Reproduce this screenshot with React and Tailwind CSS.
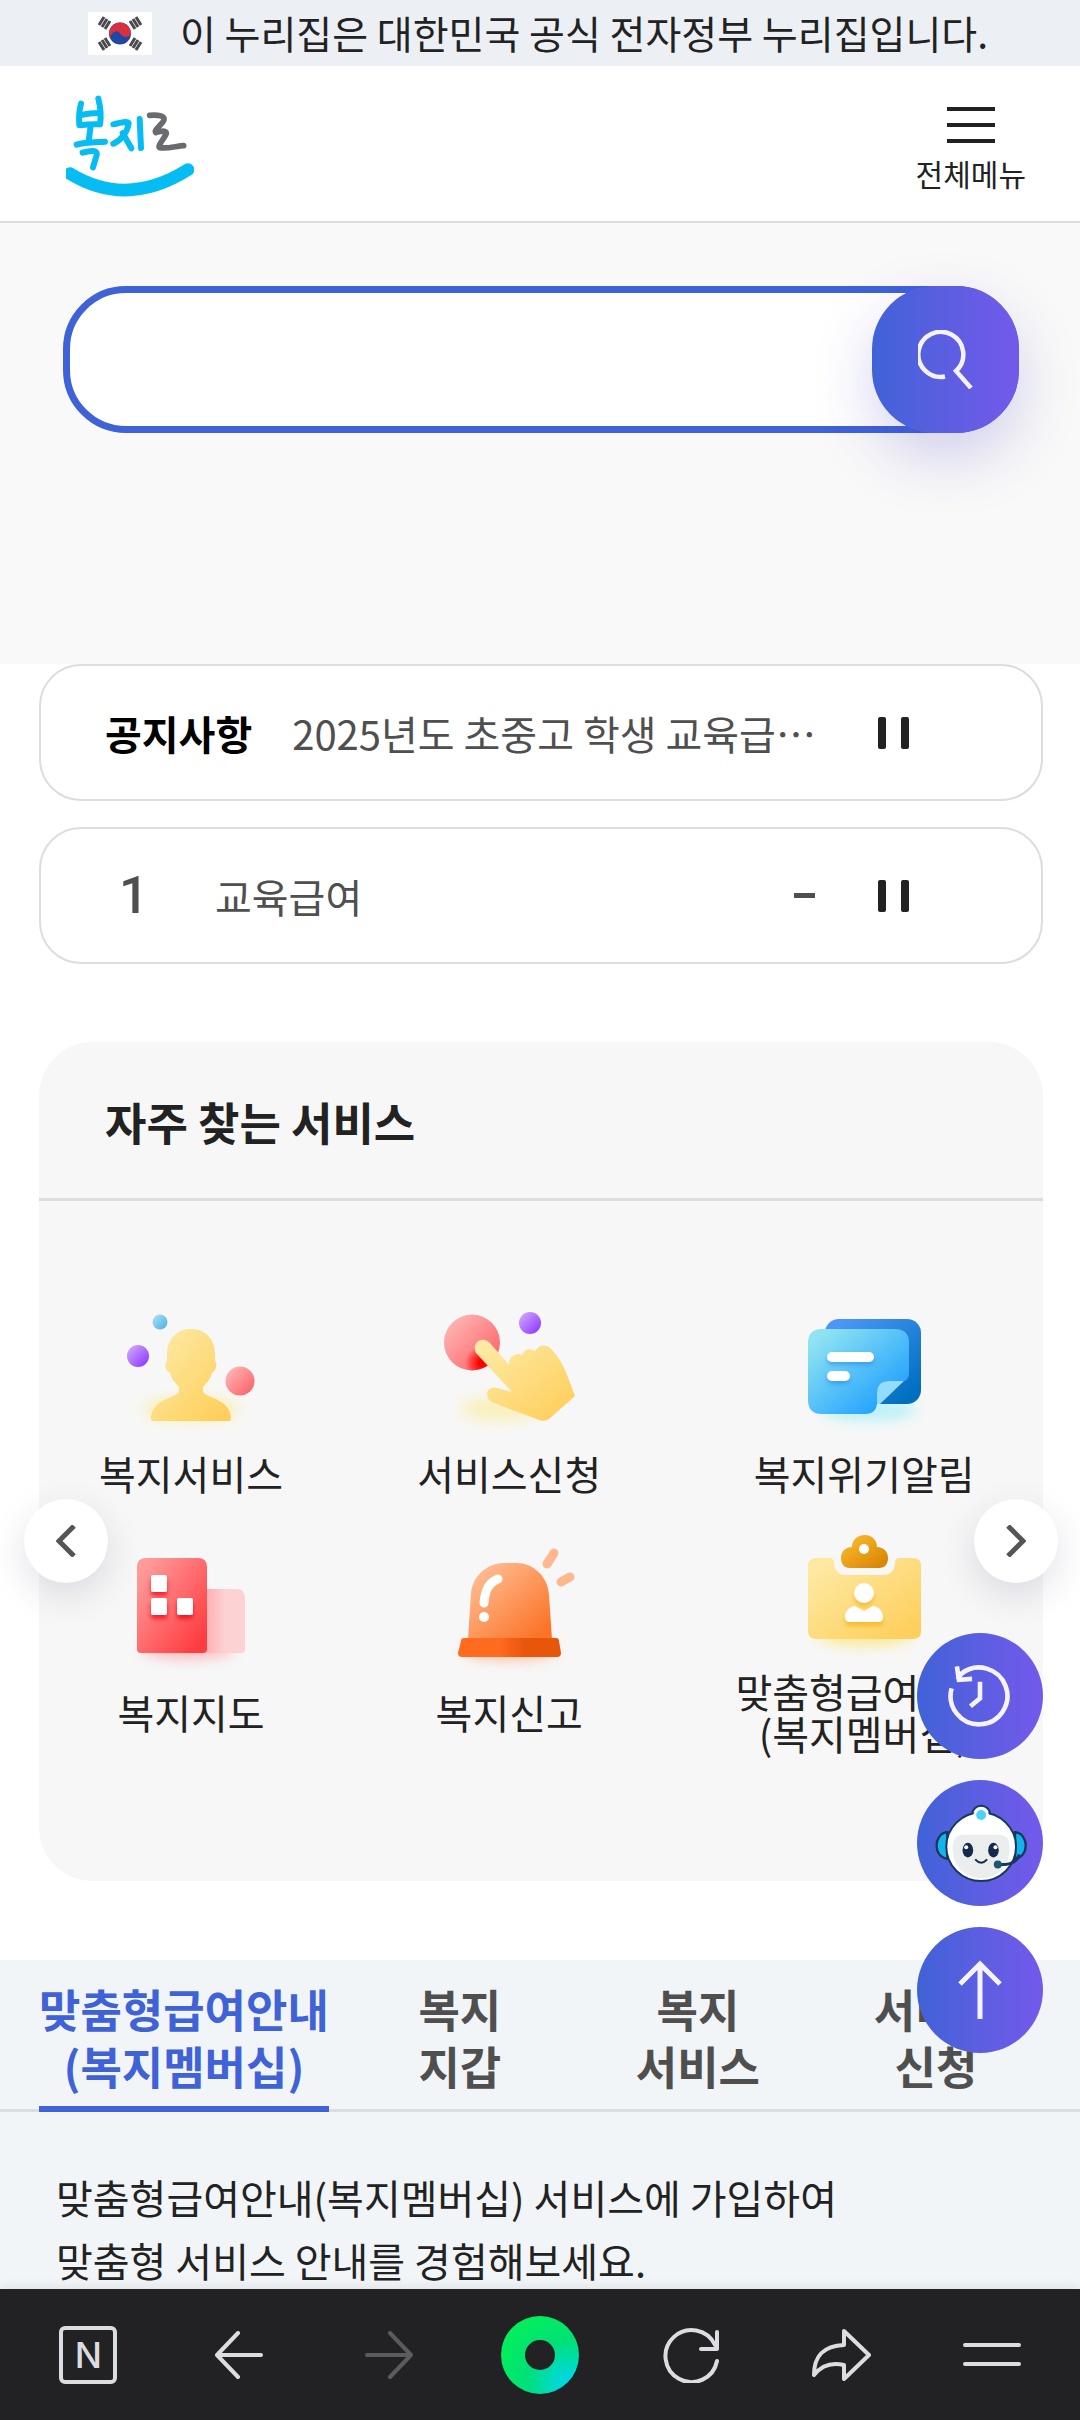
import React, { useState } from 'react';

const Flag = () => (
  <svg viewBox="0 0 64 43" className="w-16 h-[43px] bg-white" aria-hidden="true">
    <g stroke="#4a4a4c" strokeWidth="3">
      <path d="M11 13l5-8M14 15l5-8M17 17l5-8" />
      <path d="M48 5l5 8M45 7l5 8M42 9l5 8" />
      <path d="M11 30l5 8M14 28l5 8M17 26l5 8" />
      <path d="M48 38l5-8M45 36l5-8M42 34l5-8" />
    </g>
    <circle cx="32" cy="21.500" r="11" fill="#1f47a5" />
    <path d="M22 17A11 11 0 0 1 43 22C41 26 35 26 32 21.500C29 17 24 20 22 26A11 11 0 0 1 22 17Z" fill="#d9303e" />
  </svg>
);

const Logo = () => (
  <svg viewBox="48 39 384 312" className="w-32 h-[104px]" fill="none" strokeLinecap="round" strokeLinejoin="round" aria-hidden="true">
    <g stroke="#05bdf2" strokeWidth="18">
      <path d="M93 68C87 90 86 110 88 132" />
      <path d="M145 53C152 80 154 105 150 130" />
      <path d="M92 102C110 98 130 96 148 96M90 133C110 130 130 129 148 130" />
      <path d="M122 134L116 182M80 191C105 184 140 184 165 182" />
      <path d="M98 215C125 207 143 207 140 222L129 259" />
      <path d="M190 130C210 126 236 118 236 128C232 155 212 178 190 188" />
      <path d="M218 156L244 202M269 114L273 201" />
      <path d="M60 278Q230 382 414 266" strokeWidth="38" />
    </g>
    <path d="M299 103C325 100 347 106 342 117C337 130 308 150 318 155C338 148 355 148 347 162C337 180 322 196 329 200C350 204 380 195 401 194" stroke="#6a6b6f" strokeWidth="17" />
  </svg>
);

const Dot = ({ cx, cy, r, fill }) => <circle cx={cx} cy={cy} r={r} fill={`url(#${fill})`} />;

const Gradient = ({ id, from, to }) => (
  <linearGradient id={id} x1="0" y1="0" x2="1" y2="1">
    <stop offset="0.1" stopColor={from} />
    <stop offset="0.9" stopColor={to} />
  </linearGradient>
);

/* shared gradients for the service icons */
const IconDefs = () => (
  <svg className="absolute w-0 h-0" aria-hidden="true">
    <defs>
      <Gradient id="yellow" from="#fde9a2" to="#ffcf5d" />
      <Gradient id="purple" from="#cfa4ff" to="#8f3bff" />
      <Gradient id="sky" from="#a9ddf5" to="#4fb5e2" />
      <Gradient id="pink" from="#ffb5b5" to="#fb6468" />
      <Gradient id="note" from="#8fe3f2" to="#189cff" />
      <Gradient id="noteBack" from="#4c97f6" to="#006fbf" />
      <Gradient id="building" from="#ff9a9a" to="#ff3c40" />
      <Gradient id="siren" from="#ffbd94" to="#fb7427" />
      <Gradient id="clip" from="#fbbb2b" to="#d98506" />
      <linearGradient id="sirenBase">
        <stop offset="0.4" stopColor="#ff6b1f" />
        <stop offset="0.65" stopColor="#e8560c" />
      </linearGradient>
      <linearGradient id="buildingBack">
        <stop offset="0" stopColor="#fdb0b3" />
        <stop offset="0.5" stopColor="#fdd2d4" />
      </linearGradient>
      <radialGradient id="press">
        <stop offset="0.2" stopColor="#ff0000" />
        <stop offset="1" stopColor="#ff0000" stopOpacity="0" />
      </radialGradient>
      <clipPath id="pressClip">
        <circle cx="28" cy="40.500" r="28" />
      </clipPath>
      <filter id="glow" x="-40%" y="-100%" width="180%" height="300%">
        <feGaussianBlur stdDeviation="7" />
      </filter>
      <filter id="drop" x="-30%" y="-30%" width="160%" height="190%">
        <feDropShadow dx="0" dy="3" stdDeviation="2" floodColor="#1b7fe0" floodOpacity="0.5" />
      </filter>
      <filter id="dropRed" x="-30%" y="-30%" width="160%" height="190%">
        <feDropShadow dx="0" dy="4" stdDeviation="2" floodColor="#e80010" floodOpacity="0.7" />
      </filter>
      <filter id="dropYellow" x="-30%" y="-30%" width="160%" height="190%">
        <feDropShadow dx="0" dy="4" stdDeviation="2" floodColor="#f8a800" floodOpacity="0.6" />
      </filter>
    </defs>
  </svg>
);

const PersonIcon = () => (
  <>
    <ellipse cx="65" cy="107" rx="48" ry="12" fill="#fbec94" opacity="0.7" filter="url(#glow)" />
    <Dot cx="34" cy="20" r="7.5" fill="sky" />
    <Dot cx="12" cy="54" r="11" fill="purple" />
    <Dot cx="114" cy="79" r="14.5" fill="pink" />
    <path d="M65 27C79 27 89 37 89 52V59C92 61 90 69 86 71C85 76 81 81 77 85V90C80 96 105 97 105 117Q105 119 103 119H27Q25 119 25 117C25 97 50 96 53 90V85C49 81 45 76 44 71C39 69 38 61 41 59V52C41 37 51 27 65 27Z" fill="url(#yellow)" />
  </>
);

const TouchIcon = () => (
  <>
    <ellipse cx="56" cy="107" rx="40" ry="12" fill="#fbec94" opacity="0.6" filter="url(#glow)" />
    <Dot cx="28" cy="40.5" r="28" fill="pink" />
    <circle cx="38" cy="61" r="17" fill="url(#press)" clipPath="url(#pressClip)" />
    <Dot cx="86" cy="21" r="11" fill="purple" />
    <path d="M32 51C27 41 38 33 46 41L65 63C64 55 72 50 78 53C80 47 86 46 91 49C95 43 101 42 106 46C116 56 119 61 131 94L105 117Q101 120 95 118L50 101C39 97 42 83 53 86L68 90Z" fill="url(#yellow)" />
  </>
);

const NoteIcon = () => (
  <>
    <ellipse cx="70" cy="108" rx="48" ry="10" fill="#a5eff8" opacity="0.8" filter="url(#glow)" />
    <rect x="26" y="17" width="96" height="85" rx="14" fill="url(#noteBack)" />
    <path d="M23 27H96Q110 27 110 41V72Q110 76 106 79H90Q78 79 78 91V100Q78 112 66 112H23Q9 112 9 98V41Q9 27 23 27Z" fill="url(#note)" />
    <path d="M78 102V91Q78 79 90 79H105L81 102Z" fill="#93dbff" />
    <g fill="#fff" filter="url(#drop)">
      <rect x="28" y="50" width="47" height="10" rx="5" />
      <rect x="28" y="69" width="23" height="10" rx="5" />
    </g>
  </>
);

const BuildingIcon = () => (
  <>
    <ellipse cx="62" cy="108" rx="46" ry="9" fill="#ff7076" opacity="0.5" filter="url(#glow)" />
    <path d="M80 48H110Q119 48 119 57V108Q119 112 115 112H80Z" fill="url(#buildingBack)" />
    <path d="M20 17H72Q81 17 81 26V108Q81 112 77 112H15Q11 112 11 108V26Q11 17 20 17Z" fill="url(#building)" />
    <g fill="#fff" filter="url(#dropRed)">
      <rect x="25" y="34" width="16" height="17" rx="2" />
      <rect x="25" y="57" width="16" height="17" rx="2" />
      <rect x="51" y="57" width="16" height="17" rx="2" />
    </g>
  </>
);

const SirenIcon = () => (
  <>
    <ellipse cx="66" cy="110" rx="46" ry="8" fill="#ff9052" opacity="0.6" filter="url(#glow)" />
    <path d="M24 98L27 52C29 34 44 22 60 22H72C89 22 104 35 105 54L108 98Z" fill="url(#siren)" />
    <path d="M20 97H112Q115 97 115 100L117 112Q117 116 113 116H18Q14 116 14 112L17 100Q17 97 20 97Z" fill="url(#sirenBase)" />
    <g fill="none" strokeLinecap="round" strokeWidth="9">
      <path d="M110 12L103 23M126 36L117 41" stroke="#ffb78e" />
      <path d="M54 38C44 42 41 50 40 62" stroke="#fff" />
    </g>
    <circle cx="40" cy="76" r="5" fill="#fff" />
  </>
);

const ClipboardIcon = () => (
  <>
    <ellipse cx="66" cy="116" rx="48" ry="10" fill="#fbe67c" opacity="0.8" filter="url(#glow)" />
    <path d="M17 38H30Q35 38 35 43Q36 55 47 55H84Q95 55 96 43Q96 38 101 38H114Q122 38 122 46V111Q122 119 114 119H17Q9 119 9 111V46Q9 38 17 38Z" fill="url(#yellow)" />
    <path d="M53 27C53 20 58 15 66 15C73 15 78 20 78 27C85 27 89 32 89 38C89 44 86 48 80 48H51C45 48 42 44 42 38C42 32 46 27 53 27Z" fill="url(#clip)" />
    <circle cx="65" cy="29" r="5" fill="#fff" />
    <g fill="#fff" filter="url(#dropYellow)">
      <circle cx="65" cy="73" r="10" />
      <path d="M56 86L65 91L74 86C80 87 84 91 84 97Q84 102 79 102H51Q46 102 46 97C46 91 50 87 56 86Z" />
    </g>
  </>
);

const services = [
  { label: ['복지서비스'], Icon: PersonIcon },
  { label: ['서비스신청'], Icon: TouchIcon },
  { label: ['복지위기알림'], Icon: NoteIcon },
  { label: ['복지지도'], Icon: BuildingIcon },
  { label: ['복지신고'], Icon: SirenIcon },
  { label: ['맞춤형급여안내', '(복지멤버십)'], Icon: ClipboardIcon },
];

const tabs = [
  ['맞춤형급여안내', '(복지멤버십)'],
  ['복지', '지갑'],
  ['복지', '서비스'],
  ['서비스', '신청'],
];

const PauseButton = ({ label }) => (
  <button type="button" aria-label={label} className="flex gap-[15px] shrink-0">
    <span className="w-2 h-8 bg-[#222] rounded-xs" />
    <span className="w-2 h-8 bg-[#222] rounded-xs" />
  </button>
);

const SlideButton = ({ label, d, className }) => (
  <button
    type="button"
    aria-label={label}
    className={`absolute top-[457px] size-[84px] rounded-full bg-white shadow-[0_12px_36px_rgba(40,50,100,0.14)] flex items-center justify-center ${className}`}
  >
    <svg viewBox="0 0 20 32" className="w-5 h-8" fill="none" stroke="#555" strokeWidth="5" aria-hidden="true">
      <path d={d} />
    </svg>
  </button>
);

const FloatButton = ({ label, children }) => (
  <button
    type="button"
    aria-label={label}
    className="size-[126px] rounded-full bg-linear-to-r from-[#3f62d7] to-[#7359eb] flex items-center justify-center"
  >
    {children}
  </button>
);

const Robot = () => (
  <svg viewBox="215 605 280 245" className="w-[93px] h-[82px]" aria-hidden="true">
    <g fill="#12b4ee" stroke="#17375c" strokeWidth="7">
      <path d="M255 695C212 700 212 770 255 775Z" />
      <path d="M459 695C502 700 502 770 459 775Z" />
    </g>
    <circle cx="357" cy="642" r="27" fill="#fff" stroke="#17375c" strokeWidth="6" />
    <ellipse cx="357" cy="739" rx="105" ry="103" fill="#fff" stroke="#17375c" strokeWidth="6" />
    <circle cx="357" cy="645" r="23" fill="#fff" />
    <circle cx="357" cy="643" r="15" fill="#4cd2fb" />
    <path d="M305 703H409Q442 703 443 740C443 800 405 833 357 833S271 800 271 740Q272 703 305 703Z" fill="#eceeee" />
    <g fill="#122a4c">
      <ellipse cx="317" cy="749" rx="16" ry="22" />
      <ellipse cx="394" cy="749" rx="16" ry="22" />
    </g>
    <g fill="#fff">
      <circle cx="312" cy="740" r="6" />
      <circle cx="400" cy="740" r="6" />
    </g>
    <path d="M339 777Q357 797 375 777" fill="none" stroke="#122a4c" strokeWidth="6" />
    <path d="M407 792H430Q462 790 472 762" fill="none" stroke="#17375c" strokeWidth="9" />
    <circle cx="407" cy="792" r="12" fill="#1d5574" />
  </svg>
);

const NavButton = ({ label, children, disabled }) => (
  <button type="button" aria-label={label} disabled={disabled} className="flex-1 flex items-center justify-center">
    {children}
  </button>
);

const navIcon = {
  fill: 'none',
  stroke: '#dcdde0',
  strokeWidth: 4,
  strokeLinecap: 'round',
  strokeLinejoin: 'round',
  'aria-hidden': true,
};

const App = () => {
  const [keyword, setKeyword] = useState('');
  const [activeTab, setActiveTab] = useState(0);

  return (
    <div className="min-h-screen flex flex-col bg-white text-[#222] font-['Noto_Sans_CJK_KR',sans-serif]">
      <IconDefs />

      {/* Government notice */}
      <div className="h-[66px] bg-[#ecf0f5] flex items-center justify-center gap-7 text-[39px] leading-[64px] whitespace-nowrap">
        <Flag />
        <p className="pb-0.5 pr-1">이 누리집은 대한민국 공식 전자정부 누리집입니다.</p>
      </div>

      {/* Header */}
      <header className="h-[157px] border-b-2 border-[#ddd] flex items-center justify-between pl-[66px] pr-[54px]">
        <a href="#home" aria-label="복지로" className="pt-1">
          <Logo />
        </a>
        <button type="button" className="flex flex-col items-center">
          <span className="flex flex-col gap-3 pt-[10px]">
            <span className="w-12 h-1 bg-[#222]" />
            <span className="w-12 h-1 bg-[#222]" />
            <span className="w-12 h-1 bg-[#222]" />
          </span>
          <span className="mt-3 text-[30px] leading-9">전체메뉴</span>
        </button>
      </header>

      <main className="flex-1 flex flex-col">
        {/* Search */}
        <section className="h-[441px] bg-[#f9f9f9] pt-[63px] pl-[63px] pr-[61px]">
          <form onSubmit={(e) => e.preventDefault()} className="h-[147px] flex rounded-[63px] bg-white border-7 border-[#3f62d7]">
            <input
              type="text"
              name="keyword"
              aria-label="검색어"
              value={keyword}
              onChange={(e) => setKeyword(e.target.value)}
              className="flex-1 min-w-0 rounded-l-[56px] px-12 text-[40px] outline-none"
            />
            <button
              type="submit"
              aria-label="검색"
              className="-my-[7px] -mr-[7px] w-[147px] rounded-[63px] bg-linear-to-r from-[#3f62d7] to-[#7359eb] shadow-[0_24px_60px_rgba(70,60,190,0.22)] flex items-center justify-center"
            >
              <svg viewBox="0 0 55 59" className="w-[55px] h-[59px]" fill="none" stroke="#f4f2ff" strokeWidth="4.500" aria-hidden="true">
                <path d="M27 46.500A22.500 22.500 0 1 1 38 41L53 58" />
              </svg>
            </button>
          </form>
        </section>

        {/* Notice and ranking */}
        <section className="pl-[39px] pr-[37px] flex flex-col gap-[26px] text-[40px]">
          <div className="h-[137px] border-2 border-[#ddd] rounded-[42px] pl-16 pr-[132px] flex items-center">
            <h2 className="font-bold text-black shrink-0">공지사항</h2>
            <a href="#notice" className="ml-10 flex-1 min-w-0 truncate text-[#4f4f4f]">
              2025년도 초중고 학생 교육급…
            </a>
            <PauseButton label="공지사항 정지" />
          </div>
          <div className="h-[137px] border-2 border-[#ddd] rounded-[42px] pl-[78px] pr-[132px] flex items-center text-[#4f4f4f]">
            <strong className="w-24 text-[52px] font-medium font-['Roboto',sans-serif]">1</strong>
            <a href="#rank" className="flex-1">교육급여</a>
            <span className="w-[21px] h-[5px] bg-[#4f4f4f] mr-[63px]" />
            <PauseButton label="인기검색어 정지" />
          </div>
        </section>

        {/* Frequently used services */}
        <section className="relative mt-[78px] ml-[39px] mr-[37px] bg-[#f7f7f7] rounded-[54px]">
          <h2 className="h-[159px] border-b-3 border-[#ddd] pl-[66px] text-[45px] leading-[160px] font-bold">자주 찾는 서비스</h2>
          <ul className="grid grid-cols-[auto_auto_auto] justify-between items-center gap-y-6 pt-[101px] pb-[125px] pl-[60px] pr-[50px]">
            {services.map(({ label, Icon }) => (
              <li key={label[0]}>
                <a href="#service" className="flex flex-col items-center">
                  <svg viewBox="0 0 130 130" className="size-[130px] overflow-visible" aria-hidden="true">
                    <Icon />
                  </svg>
                  <span className="mt-5 pb-0.5 text-[40px] leading-[42px] text-center">
                    {label.map((line) => (
                      <span key={line} className="block">{line}</span>
                    ))}
                  </span>
                </a>
              </li>
            ))}
          </ul>
          <SlideButton label="이전" d="M18 1L3 16L18 31" className="-left-[15px]" />
          <SlideButton label="다음" d="M2 1L17 16L2 31" className="-right-[15px]" />
        </section>

        {/* Tabs */}
        <section className="flex-1 mt-[79px] bg-[#f1f5f7]">
          <div role="tablist" className="flex pl-[39px] pr-[25px] border-b-3 border-[#ddd] text-[45px] leading-[57px] font-bold">
            {tabs.map((lines, i) => (
              <button
                key={lines.join('')}
                type="button"
                role="tab"
                aria-selected={activeTab === i}
                onClick={() => setActiveTab(i)}
                className={`-mb-[3px] pt-5 pb-3 border-b-6 ${i === 0 ? 'mr-3 shrink-0' : 'flex-1'} ${
                  activeTab === i ? 'text-[#3f62d7] border-[#3f62d7]' : 'text-[#4f4f4f] border-transparent'
                }`}
              >
                {lines.map((line) => (
                  <span key={line} className="block">{line}</span>
                ))}
              </button>
            ))}
          </div>
          <p className="h-44 pt-[54px] px-14 text-[40px] leading-[63px]">
            맞춤형급여안내(복지멤버십) 서비스에 가입하여
            <br />
            맞춤형 서비스 안내를 경험해보세요.
          </p>
        </section>
      </main>

      {/* Floating buttons */}
      <div className="fixed right-[37px] bottom-[367px] flex flex-col gap-[21px]">
        <FloatButton label="최근 이용">
          <svg viewBox="260 188 200 200" className="size-[66px]" fill="none" stroke="#f5f3ff" strokeWidth="14" aria-hidden="true">
            <path d="M274 265A86 86 0 1 0 304 220L292 238" />
            <path d="M290 198L296 239L336 236" />
            <path d="M360 245V295L331 319" />
          </svg>
        </FloatButton>
        <FloatButton label="챗봇">
          <Robot />
        </FloatButton>
        <FloatButton label="맨 위로">
          <svg viewBox="0 0 44 60" className="w-11 h-[60px]" fill="none" stroke="#f5f3ff" strokeWidth="5" aria-hidden="true">
            <path d="M22 59V3M2 24L22 4L42 24" />
          </svg>
        </FloatButton>
      </div>

      {/* Browser bar */}
      <nav className="sticky bottom-0 h-[131px] bg-[#222224] px-[13px] flex shadow-[0_-2px_12px_rgba(0,0,0,0.08)]">
        <NavButton label="네이버">
          <span className="size-[58px] border-4 border-[#dcdde0] rounded-md flex items-center justify-center text-[#dcdde0] text-[36px] leading-none font-medium font-['Inter',sans-serif]">
            N
          </span>
        </NavButton>
        <NavButton label="뒤로">
          <svg viewBox="0 0 48 48" className="size-12" {...navIcon}>
            <path d="M46 24H3M23 2L2 24L23 46" />
          </svg>
        </NavButton>
        <NavButton label="앞으로" disabled>
          <svg viewBox="0 0 48 48" className="size-12" {...navIcon} stroke="#5b5b5e">
            <path d="M2 24H45M25 2L46 24L25 46" />
          </svg>
        </NavButton>
        <NavButton label="그린닷">
          <span className="size-[78px] rounded-full bg-[radial-gradient(circle_at_88%_88%,#00d8e0_8%,#00e077_45%,#04ee5c_80%)] flex items-center justify-center">
            <span className="size-[30px] rounded-full bg-[#222224]" />
          </span>
        </NavButton>
        <NavButton label="새로고침">
          <svg viewBox="0 0 56 56" className="size-14" {...navIcon}>
            <path d="M54 34A26 26 0 1 1 52 18M54 5V22H38" />
          </svg>
        </NavButton>
        <NavButton label="공유">
          <svg viewBox="0 0 60 52" className="w-[60px] h-[52px]" {...navIcon}>
            <path d="M33 2L58 26L33 50V36C20 33 10 37 3 46C3 26 13 17 33 16Z" />
          </svg>
        </NavButton>
        <NavButton label="메뉴">
          <span className="flex flex-col gap-[15px]">
            <span className="w-[58px] h-1 rounded-full bg-[#dcdde0]" />
            <span className="w-[58px] h-1 rounded-full bg-[#dcdde0]" />
          </span>
        </NavButton>
      </nav>
    </div>
  );
};

export default App;
